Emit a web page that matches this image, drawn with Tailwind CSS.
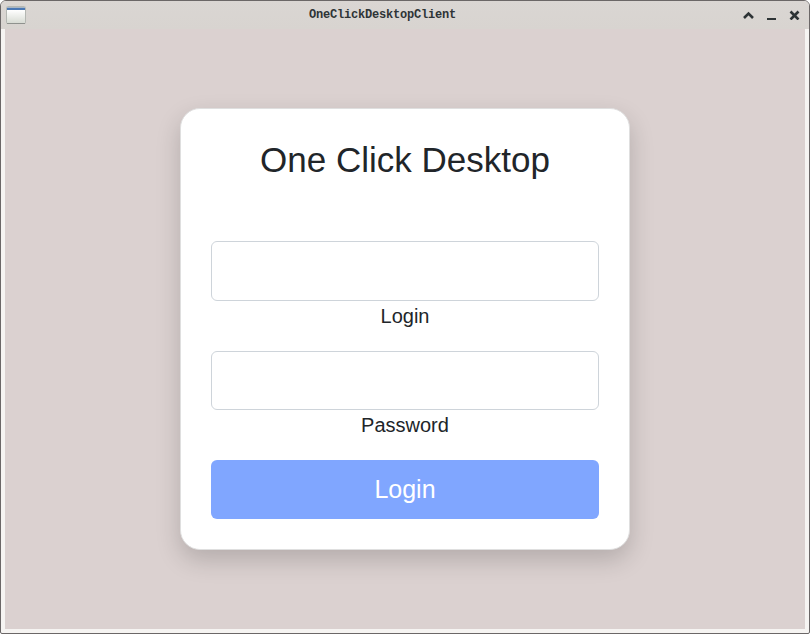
<!DOCTYPE html>
<html lang="en">
<head>
<meta charset="utf-8">
<title>OneClickDesktopClient</title>
<script src="https://cdn.jsdelivr.net/npm/@tailwindcss/browser@4"></script>
</head>
<body class="h-[634px] w-[810px] overflow-hidden bg-white font-['Liberation_Sans',Arial,sans-serif] text-[#212529]">
<div class="flex h-[634px] w-[810px] flex-col overflow-hidden rounded-t-[6px] rounded-b-[2px] border border-[#6b6767] bg-[#f6f4f2]">
  <header class="grid h-7 shrink-0 grid-cols-[80px_1fr_125px] items-center bg-linear-to-b from-[#dad6d3] to-[#d8d4d0]">
    <svg class="ml-[5px]" width="20" height="18" viewBox="0 0 20 18">
      <defs><linearGradient id="pane" x1="0" y1="0" x2="0" y2="1"><stop offset="0.2" stop-color="#fff"/><stop offset="1" stop-color="#d6dad2"/></linearGradient></defs>
      <rect x=".5" y=".5" width="19" height="17" rx="1" fill="url(#pane)" stroke="#b4b7b2"/>
      <path d="M1 17.5h18" stroke="#8f928e"/>
      <path d="M1 2h18v2H1z" fill="#4a78b5"/>
      <path d="M1 1h18v1H1z" fill="#a9b6c5"/>
    </svg>
    <h1 class="-mt-px text-center font-['Liberation_Mono',monospace] text-[12px] leading-4 font-bold tracking-[-0.2px] text-[#2e3436]">OneClickDesktopClient</h1>
    <svg class="-mt-0.5 ml-auto mr-[9px]" width="58" height="12" viewBox="0 0 58 12" fill="none" stroke="#2e3436">
      <path d="M2 10 6.5 5.500 11 10" stroke-width="2.6"/>
      <path d="M25 11h9" stroke-width="2"/>
      <path d="m48.500 3.500 8 8m0-8-8 8" stroke-width="2.600"/>
    </svg>
  </header>
  <main class="mx-1 mb-1 flex h-[600px] items-center justify-center bg-[#dbd1d0]">
    <form class="flex h-[442px] w-[450px] flex-col rounded-[20px] border border-[#dfdfdf] bg-white px-[30px] pt-[30px] text-center shadow-[0_10px_25px_rgba(0,0,0,0.18)]">
      <h2 class="mb-[60px] h-[42px] text-[35px] leading-[42px]">One Click Desktop</h2>
      <input id="login" type="text" class="h-[60px] w-full rounded-[6px] border border-[#ced4da] px-4 text-[25px]">
      <label for="login" class="h-[50px] text-[20px] leading-[30px]">Login</label>
      <input id="password" type="password" class="h-[59px] w-full rounded-[6px] border border-[#ced4da] px-4 text-[25px]">
      <label for="password" class="h-[50px] text-[20px] leading-[30px]">Password</label>
      <button type="button" class="h-[59px] w-full rounded-[6px] bg-[#80a6ff] text-[25px] text-white">Login</button>
    </form>
  </main>
</div>
</body>
</html>
